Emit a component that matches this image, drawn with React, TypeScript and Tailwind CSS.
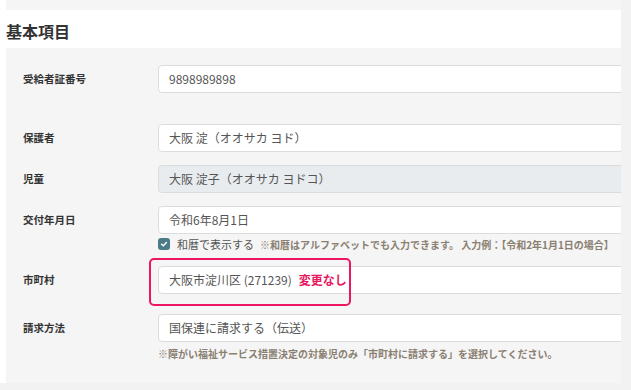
import React from "react";

const FONT = { fontFamily: '"Noto Sans CJK JP", "Noto Sans", sans-serif' };

function Field({ value, disabled }: { value: string; disabled?: boolean }) {
  return (
    <div
      className={
        "flex h-[28px] w-[480px] shrink-0 items-center rounded-[4px] border border-[#dcdcdc] pl-[10px] text-[12px] text-[#555] " +
        (disabled ? "bg-[#e9ecef]" : "bg-white")
      }
    >
      {value}
    </div>
  );
}

function Row({ label, children, className = "" }: { label: string; children: React.ReactNode; className?: string }) {
  return (
    <div className={"flex items-center " + className}>
      <div className="w-[135px] shrink-0 text-[10.5px] font-bold text-[#333]">{label}</div>
      {children}
    </div>
  );
}

export default function App() {
  return (
    <div className="h-[390px] w-[631px] overflow-hidden bg-[#f2f2f2]" style={FONT}>
      <div className="w-[621px] bg-white">
        <div className="ml-[6px] h-[10px] bg-[#f5f5f5]" />
        <h2 className="flex h-[38px] items-center pl-[6px] pt-[4px] text-[16px] font-bold text-[#333]">基本項目</h2>
        <div className="relative ml-[6px] h-[335px] overflow-hidden bg-[#f5f5f5] pl-[17px] pt-[17px]">
          <Row label="受給者証番号">
            <Field value="9898989898" />
          </Row>
          <Row label="保護者" className="mt-[31px]">
            <Field value="大阪 淀（オオサカ ヨド）" />
          </Row>
          <Row label="児童" className="mt-[13px]">
            <Field value="大阪 淀子（オオサカ ヨドコ）" disabled />
          </Row>
          <Row label="交付年月日" className="mt-[13px]">
            <Field value="令和6年8月1日" />
          </Row>
          <div className="flex h-[20px] items-center pl-[135px] whitespace-nowrap">
            <span className="flex h-[12px] w-[12px] shrink-0 items-center justify-center rounded-[3px] bg-[#4b7b89]">
              <svg width="8" height="8" viewBox="0 0 10 10" fill="none">
                <path d="M2 5.2 L4.2 7.3 L8 3" stroke="white" strokeWidth="1.8" strokeLinecap="round" strokeLinejoin="round" />
              </svg>
            </span>
            <span className="ml-[7px] shrink-0 text-[11px] text-[#555]">和暦で表示する</span>
            <span className="ml-[6px] shrink-0 text-[10px] font-bold text-[#8a8072]">
              ※和暦はアルファベットでも入力できます。 入力例：【令和2年1月1日の場合】
            </span>
          </div>
          <Row label="市町村" className="mt-[12px]">
            <div className="flex h-[28px] w-[480px] shrink-0 items-center whitespace-nowrap rounded-[4px] border border-[#dcdcdc] bg-white pl-[10px] text-[12px] text-[#555]">
              大阪市淀川区 (271239)
              <span className="ml-[7px] text-[12px] font-bold text-[#e8195f]">変更なし</span>
            </div>
          </Row>
          <div className="pointer-events-none absolute left-[143px] top-[210px] h-[48px] w-[202px] rounded-[5px] border-2 border-[#ec1663]" />
          <Row label="請求方法" className="mt-[20px]">
            <Field value="国保連に請求する（伝送）" />
          </Row>
          <div className="mt-[4px] pl-[135px] text-[10px] font-bold text-[#8a8072] whitespace-nowrap">
            ※障がい福祉サービス措置決定の対象児のみ「市町村に請求する」を選択してください。
          </div>
        </div>
      </div>
    </div>
  );
}
